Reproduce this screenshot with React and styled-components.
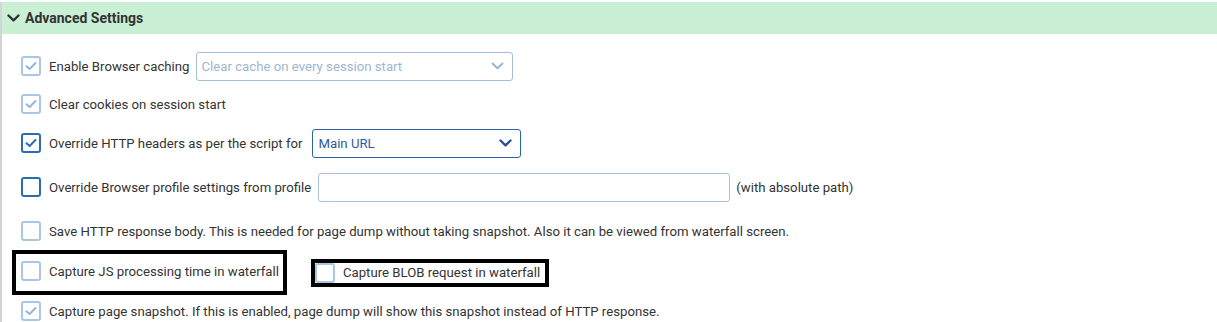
import React from "react";
import styled, { createGlobalStyle } from "styled-components";

const Global = createGlobalStyle`
  html, body { margin: 0; padding: 0; background: #fff; }
  body { font-family: Roboto, "Liberation Sans", Arial, sans-serif; color: #333; }
`;

const Panel = styled.div`
  margin-top: 2px;
  border-left: 2px solid #d4d4d4;
  height: 320px;
  overflow: hidden;
`;

const Header = styled.div`
  height: 32px;
  background: #c9efd5;
  display: flex;
  align-items: center;
  gap: 5px;
  padding-left: 5px;
  font-size: 14px;
  font-weight: 700;
  color: #333;
`;

const Body = styled.div`
  display: flex;
  flex-direction: column;
  padding-top: 14px;
  padding-left: 19px;
`;

const Row = styled.div`
  display: flex;
  align-items: center;
  height: ${(p) => p.$h}px;
`;

const Label = styled.label`
  display: flex;
  align-items: center;
  gap: 8px;
  font-size: 13.2px;
  color: #333;
  white-space: nowrap;
`;

const Box = styled.span`
  box-sizing: border-box;
  width: 20px;
  height: 20px;
  border-radius: 3px;
  border: 2px solid ${(p) => (p.$dark ? "#2b6cb3" : "#a9c6e6")};
  display: inline-flex;
  align-items: center;
  justify-content: center;
  flex: none;
  background: #fff;
`;

const Check = ({ dark, checked }) => (
  <Box $dark={dark}>
    {checked && (
      <svg width="12" height="10" viewBox="0 0 12 10">
        <path
          d="M1.5 5.2 L4.6 8 L10.5 2"
          fill="none"
          stroke={dark ? "#2b6cb3" : "#93b7de"}
          strokeWidth="2"
          strokeLinecap="round"
          strokeLinejoin="round"
        />
      </svg>
    )}
  </Box>
);

const Select = styled.div`
  box-sizing: border-box;
  height: 29px;
  width: ${(p) => p.$w}px;
  margin-left: ${(p) => p.$ml}px;
  border: 1px solid ${(p) => (p.$dark ? "#2c62a6" : "#a4bfdd")};
  border-radius: 3px;
  display: flex;
  align-items: center;
  justify-content: space-between;
  padding: 0 8px 0 5px;
  font-size: 13.2px;
  color: ${(p) => (p.$dark ? "#2c5c9c" : "#a0b6d0")};
`;

const TextInput = styled.div`
  box-sizing: border-box;
  height: 29px;
  width: 412px;
  margin-left: 7px;
  border: 1px solid #a9c0da;
  border-radius: 3px;
  background: #fff;
`;

const Note = styled.span`
  font-size: 13.2px;
  color: #333;
  margin-left: 6px;
`;

const Highlight = styled.div`
  display: flex;
  align-items: center;
  border: 4px solid #000;
  padding: ${(p) => p.$pad};
  margin-left: ${(p) => p.$ml}px;
`;

const Chevron = ({ color, w = 2 }) => (
  <svg width="13" height="8" viewBox="0 0 13 8">
    <path d="M1.5 1.5 L6.5 6.3 L11.5 1.5" fill="none" stroke={color} strokeWidth={w} strokeLinecap="round" strokeLinejoin="round" />
  </svg>
);

export default function App() {
  return (
    <>
      <Global />
      <Panel>
        <Header>
          <Chevron color="#333" w={2.4} />
          <span>Advanced Settings</span>
        </Header>
        <Body>
          <Row $h={36}>
            <Label>
              <Check checked />
              Enable Browser caching
            </Label>
            <Select $w={317} $ml={6}>
              <span>Clear cache on every session start</span>
              <Chevron color="#9ab6d6" />
            </Select>
          </Row>
          <Row $h={40}>
            <Label>
              <Check checked />
              Clear cookies on session start
            </Label>
          </Row>
          <Row $h={38}>
            <Label>
              <Check dark checked />
              Override HTTP headers as per the script for
            </Label>
            <Select $dark $w={209} $ml={10}>
              <span>Main URL</span>
              <Chevron color="#245394" w={2.4} />
            </Select>
          </Row>
          <Row $h={50}>
            <Label>
              <Check dark />
              Override Browser profile settings from profile
            </Label>
            <TextInput />
            <Note>(with absolute path)</Note>
          </Row>
          <Row $h={38}>
            <Label>
              <Check />
              Save HTTP response body. This is needed for page dump without taking snapshot. Also it can be viewed from waterfall screen.
            </Label>
          </Row>
          <Row $h={45}>
            <Highlight $pad="7px 4px 10px 5px" $ml={-9}>
              <Label>
                <Check />
                Capture JS processing time in waterfall
              </Label>
            </Highlight>
            <Highlight $pad="0 5px 0 0" $ml={24}>
              <Label>
                <Check />
                Capture BLOB request in waterfall
              </Label>
            </Highlight>
          </Row>
          <Row $h={32}>
            <Label>
              <Check checked />
              Capture page snapshot. If this is enabled, page dump will show this snapshot instead of HTTP response.
            </Label>
          </Row>
        </Body>
      </Panel>
    </>
  );
}
